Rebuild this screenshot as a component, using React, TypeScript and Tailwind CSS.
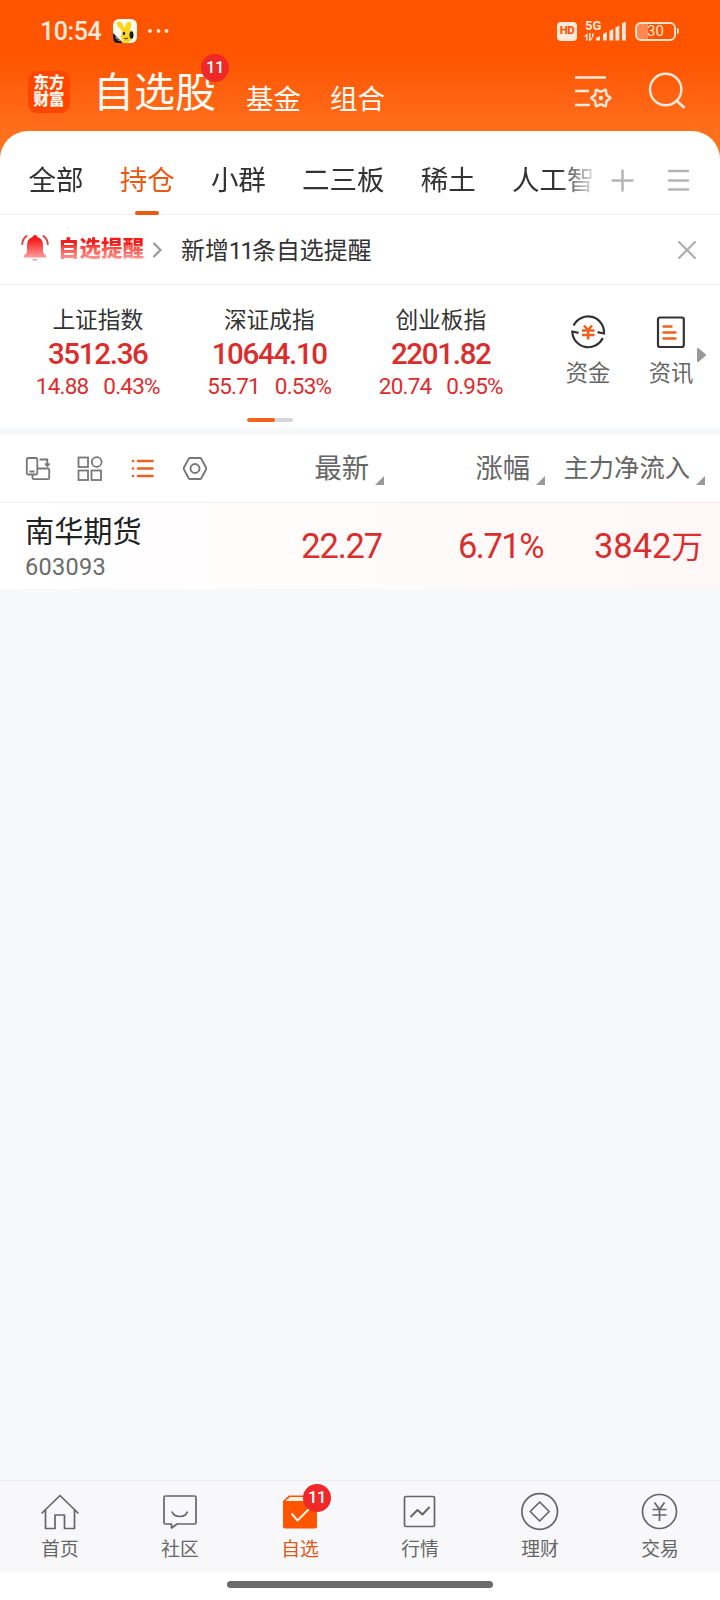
import React from "react";

const tabs = ["全部", "持仓", "小群", "二三板", "稀土", "人工智能"];

const indexes = [
  { name: "上证指数", value: "3512.36", change: "14.88", percent: "0.43%" },
  { name: "深证成指", value: "10644.10", change: "55.71", percent: "0.53%" },
  { name: "创业板指", value: "2201.82", change: "20.74", percent: "0.95%" },
];

function StatusBar() {
  return (
    <div className="flex h-[62px] items-center pl-[40px] pr-[41px] text-[#ffe9dc]">
      <span className="w-[64px] whitespace-nowrap pt-px text-[25px] font-medium leading-none tracking-[-0.4px]">
        10:54
      </span>
      <svg className="ml-[9px] h-6 w-6" viewBox="0 0 24 24">
        <rect width="24" height="24" rx="6" fill="#fffdf2" />
        <path
          d="M9 12L4 6Q2.500 2.500 6 2.500Q9 2.500 10.500 7L11.500 9L13 5Q15 1 18 4Q19 6 17 11Q21 14 20 18Q17 24 12 24Q8 23 8 17Z"
          fill="#ffd51e"
        />
        <path d="M0 14L10 24H5Q0 24 0 18Z" fill="#1d1b18" />
        <ellipse cx="18.500" cy="16" rx="2" ry="3.800" fill="#1d1b18" />
        <ellipse cx="11" cy="14.500" rx="1.200" ry="1.800" fill="#1d1b18" />
        <path d="M11 19Q13 21 15 19" fill="none" stroke="#333" />
        <path d="M2.500 18l2 2M5 20.500l1.500 1.500" stroke="#fff" />
      </svg>
      <svg className="ml-[11px] h-6 w-[22px]" viewBox="0 0 22 24" fill="currentColor">
        <circle cx="2" cy="12" r="1.9" />
        <circle cx="10.500" cy="12" r="1.9" />
        <circle cx="18.500" cy="12" r="1.9" />
      </svg>
      <span className="ml-auto flex h-[19px] w-5 items-center justify-center rounded-[4px] bg-[#ffe9dc] text-[11.500px] font-extrabold leading-none tracking-[-0.5px] text-[#ff5500]">
        HD
      </span>
      <svg className="ml-[7px] h-[24px] w-[43px]" viewBox="0 0 43 24" fill="currentColor">
        <text x="1" y="10.500" fontSize="13" fontWeight="700" fontFamily="Roboto">
          5G
        </text>
        <path d="M0 17.500l3.500-3.500v7.500H2v-4zM5 14h1.500v5.500L8.500 18v1.500L6 22H5zM8 14.500h1.500V18H8z" />
        <path d="M12 21.500v-2.500l4-2v4.500zM19 21.500v-6.500l3.800-2v8.500zM25.500 21.500v-9.500l3.800-2v11.500zM31.500 21.500V8.500l3.800-2v15zM38 21.500V4.500l3.800-2v19z" />
      </svg>
      <div className="ml-[8px] flex items-center">
        <div className="flex h-[19px] w-[41px] items-center rounded-[6px] border-2 border-[#ffe0cc] bg-linear-to-r from-[#ff8850] from-30% to-transparent to-30% text-[15px] leading-none">
          <span className="w-full text-center">30</span>
        </div>
        <span className="ml-px h-[6px] w-[2px] rounded-r bg-[#ffe0cc]" />
      </div>
    </div>
  );
}

function Header() {
  return (
    <div className="flex h-[69px] items-start text-[#fffaf5]">
      <div className="ml-7 mt-[9px] flex h-[42px] w-[42px] flex-col items-center justify-center rounded-[9px] bg-[#ff4600] text-[15.500px] font-black leading-[17px] text-[#fff5ea]">
        <span>东方</span>
        <span>财富</span>
      </div>
      <div className="relative ml-[23px] mt-[9px] w-[122px] whitespace-nowrap text-[41px] leading-[44px]">
        自选股
        <span className="absolute -top-[17px] left-[108px] flex h-7 w-7 items-center justify-center rounded-full bg-[#f02828] text-[16.500px] font-medium leading-none tracking-[-0.5px] text-white">
          11
        </span>
      </div>
      <span className="ml-[31px] mt-[22px] w-[55px] whitespace-nowrap text-[27.500px] leading-8">
        基金
      </span>
      <span className="ml-[29px] mt-[22px] w-[55px] whitespace-nowrap text-[27.500px] leading-8">
        组合
      </span>
      <svg
        className="ml-auto mt-[12px] h-[36px] w-[38px] text-[#ffe9dc]"
        viewBox="0 0 38 36"
        fill="none"
        stroke="currentColor"
        strokeWidth="2.400"
      >
        <path d="M1 3.500h31M1 17h14M1 31h15" />
        <path d="M34.900 22.600Q38.100 24 34.900 25.400Q31.750 26.800 32.100 30.200Q32.500 33.700 29.700 31.600Q26.900 29.600 24.100 31.600Q21.300 33.700 21.700 30.200Q22.050 26.800 18.900 25.400Q15.700 24 18.900 22.600Q22.050 21.200 21.700 17.800Q21.300 14.300 24.100 16.400Q26.900 18.400 29.700 16.400Q32.500 14.300 32.100 17.800Q31.750 21.200 34.900 22.600Z" />
        <circle cx="26.900" cy="24" r="1.500" fill="currentColor" strokeWidth="1.500" />
      </svg>
      <svg
        className="ml-[36px] mr-[34px] mt-[10px] h-[38px] w-[38px] text-[#ffe9dc]"
        viewBox="0 0 38 38"
        fill="none"
        stroke="currentColor"
        strokeWidth="2.400"
      >
        <circle cx="17.700" cy="17.500" r="15.700" />
        <path d="M28.500 28.500l8 7.500" strokeWidth="2.800" />
      </svg>
    </div>
  );
}

function Tabs() {
  return (
    <div className="relative flex h-[84px] items-center border-b border-[#ededef] pl-[28.500px]">
      <div className="flex w-[564px] gap-[36.200px] overflow-hidden whitespace-nowrap pt-[16px] text-[27.500px] leading-9 text-[#333] mask-r-from-94% mask-r-to-101%">
        {tabs.map((tab) => (
          <span key={tab} className={tab === "持仓" ? "text-[#ea5a14]" : ""}>
            {tab}
          </span>
        ))}
      </div>
      <span className="absolute -bottom-px left-[135px] h-1 w-6 rounded-full bg-[#ea5a14]" />
      <svg
        className="ml-[18px] mt-[15px] h-[23px] w-[23px] shrink-0"
        viewBox="0 0 23 23"
        stroke="#b4b4b4"
        strokeWidth="2.500"
        strokeLinecap="round"
      >
        <path d="M1.500 11.500h20M11.500 1.500v20" />
      </svg>
      <svg
        className="ml-[33px] mt-[15px] h-[23px] w-[23px] shrink-0"
        viewBox="0 0 23 23"
        stroke="#b4b4b4"
        strokeWidth="2.500"
        strokeLinecap="round"
      >
        <path d="M2 2h19M2 11.500h19M2 20.500h19" />
      </svg>
    </div>
  );
}

function AlertRow() {
  return (
    <div className="flex h-[70px] items-center border-b border-[#ededef] pl-[21px] pr-[23px]">
      <svg className="h-7 w-7 -mt-[3px]" viewBox="0 0 28 28" fill="none">
        <defs>
          <linearGradient id="bell" x1="0" y1="0" x2="0" y2="1">
            <stop offset="0.200" stopColor="#f51c1c" />
            <stop offset="1" stopColor="#ff9a9a" />
          </linearGradient>
        </defs>
        <path
          d="M14 1Q16 1 16.500 3Q22 5 22 11V18Q22.500 20 25 21.500V23.500H3V21.500Q5.500 20 6 18V11Q6 5 11.500 3Q12 1 14 1Z"
          fill="url(#bell)"
        />
        <path d="M11 25h6q-1 2-3 2t-3-2z" fill="#ffa5a5" />
        <path
          d="M5.500 2Q1.500 5 1.200 10M22.500 2Q26.500 5 26.800 10"
          stroke="#e84040"
          strokeWidth="2"
          strokeLinecap="round"
        />
      </svg>
      <span className="ml-[9px] -mt-px w-[87px] whitespace-nowrap bg-linear-to-b from-[#f31b1b] from-30% to-[#ff9a9a] to-90% bg-clip-text text-[21.500px] font-black leading-7 text-transparent">
        自选提醒
      </span>
      <svg
        className="ml-[7px] h-4 w-[10px]"
        viewBox="0 0 10 16"
        fill="none"
        stroke="#999"
        strokeWidth="2.200"
      >
        <path d="M1.500 1l7 7-7 7" />
      </svg>
      <span className="ml-[19px] whitespace-nowrap pt-[2px] text-[23.900px] leading-8 text-[#333]">
        新增<span className="tracking-[-1.800px]">11</span>条自选提醒
      </span>
      <svg
        className="ml-auto h-5 w-5"
        viewBox="0 0 20 20"
        stroke="#b0b0b0"
        strokeWidth="2.300"
        strokeLinecap="round"
      >
        <path d="M2 2l16 16M18 2L2 18" />
      </svg>
    </div>
  );
}

function Indexes() {
  return (
    <div className="relative flex h-[143px] pl-[12px] pt-[24px]">
      {indexes.map((item) => (
        <div
          key={item.name}
          className="flex w-[171.500px] flex-col items-center whitespace-nowrap text-[#dc2d2d]"
        >
          <span className="text-[22.700px] leading-6 text-[#333]">{item.name}</span>
          <span className="mt-[5px] text-[29.500px] font-medium leading-8 tracking-[-1.300px]">
            {item.value}
          </span>
          <div className="mt-[4px] flex gap-[15px] text-[22.500px] leading-6 tracking-[-0.800px]">
            <span>{item.change}</span>
            <span>{item.percent}</span>
          </div>
        </div>
      ))}
      <div className="ml-[20px] mt-[5px] flex w-[83px] flex-col items-center text-[22.300px] leading-7 text-[#666]">
        <svg className="h-9 w-9" viewBox="0 0 36 36" fill="none" strokeWidth="2.200">
          <path
            d="M3.600 11.500A16 16 0 0 1 34 19.500L27.500 18.200M32.800 24A16 16 0 0 1 2.300 17.500L8.500 18.800"
            stroke="#333"
          />
          <path
            d="M14 11.500l4 4.500 4-4.500M12 16.500h12.500M12 21h12.500M18.200 16v9.500"
            stroke="#f1621d"
            strokeWidth="2.500"
          />
        </svg>
        <span className="mt-[9px]">资金</span>
      </div>
      <div className="mt-[5px] flex w-[83px] flex-col items-center text-[22.300px] leading-7 text-[#666]">
        <svg className="h-9 w-9" viewBox="0 0 36 36" fill="none">
          <rect x="5" y="3.500" width="25.800" height="29.500" rx="2" stroke="#333" strokeWidth="2.200" />
          <path
            d="M10.500 12.500h8M10.500 18.500h12M10.500 24.500h12"
            stroke="#f1621d"
            strokeWidth="2.400"
            strokeLinecap="round"
          />
        </svg>
        <span className="mt-[9px]">资讯</span>
      </div>
      <svg className="absolute left-[696px] top-[62px] h-4 w-[10px]" viewBox="0 0 10 16">
        <path
          d="M2 2L9 8l-7 6z"
          fill="#999"
          stroke="#999"
          strokeWidth="2"
          strokeLinejoin="round"
        />
      </svg>
      <div className="absolute left-[247px] top-[133px] flex h-[4px] w-[46px] overflow-hidden rounded-full bg-[#d4d6da]">
        <span className="w-[28px] rounded-full bg-[#f4621c]" />
      </div>
    </div>
  );
}

function SortMark() {
  return (
    <svg className="h-[9px] w-[9px]" viewBox="0 0 9 9">
      <path d="M9 0v9H0z" fill="#999" />
    </svg>
  );
}

function TableHead() {
  return (
    <div className="flex h-[68px] items-center border-b border-[#f0f0f2] pl-[25px] pr-[15px] text-[27.300px] text-[#666]">
      <div className="flex w-[183px] items-center justify-between">
        <svg
          className="h-[26px] w-[26px]"
          viewBox="0 0 26 26"
          fill="none"
          stroke="#777"
          strokeWidth="1.800"
        >
          <rect x="1.800" y="2" width="10.500" height="16.500" rx="1.500" />
          <path d="M4.500 15.500h5M14.500 3.500h7.800v6M20 7.500l2.300 2.700 2.300-2.700" />
          <path d="M13 12.500h10q1.200 0 1.200 1.200v8.300q0 1.200-1.200 1.200H8.700q-1.200 0-1.200-1.200v-3" />
        </svg>
        <svg
          className="h-[26px] w-[26px]"
          viewBox="0 0 26 26"
          fill="none"
          stroke="#777"
          strokeWidth="1.800"
        >
          <rect x="1.500" y="1.500" width="9.500" height="9.500" />
          <circle cx="19.700" cy="6" r="4.900" />
          <rect x="1.500" y="14.500" width="9.500" height="9.500" />
          <rect x="14.500" y="14.500" width="9.500" height="9.500" />
        </svg>
        <svg
          className="h-[26px] w-[26px]"
          viewBox="0 0 26 26"
          stroke="#ea6020"
          strokeWidth="2.600"
          strokeLinecap="round"
        >
          <path d="M3 5h.1M3 12.500h.1M3 20h.1M8 5h14.500M8 12.500h14.500M8 20h14.500" />
        </svg>
        <svg
          className="h-[26px] w-[26px]"
          viewBox="0 0 26 26"
          fill="none"
          stroke="#777"
          strokeWidth="1.900"
        >
          <path d="M8 2h10q.8 0 1.300.8l4.700 8.700q.5 1 0 2l-4.700 8.700q-.5.800-1.300.800H8q-.800 0-1.300-.800l-4.700-8.700q-.5-1 0-2l4.700-8.700q.5-.8 1.300-.8z" />
          <circle cx="13" cy="12.500" r="4.500" />
        </svg>
      </div>
      <div className="flex w-[176px] items-end justify-end gap-[6px]">
        <span className="leading-8">最新</span>
        <SortMark />
      </div>
      <div className="flex w-[161px] items-end justify-end gap-[6px]">
        <span className="leading-8">涨幅</span>
        <SortMark />
      </div>
      <div className="flex w-[160px] items-end justify-end gap-[6px]">
        <span className="whitespace-nowrap text-[25.300px] leading-8">主力净流入</span>
        <SortMark />
      </div>
    </div>
  );
}

function StockRow() {
  return (
    <div className="flex h-[86px] bg-linear-to-r from-white to-[#fff7f7] pl-[25px] pr-[17px]">
      <div className="w-[184px] whitespace-nowrap pt-[11px]">
        <p className="text-[29.200px] leading-9 text-[#222]">南华期货</p>
        <p className="text-[23.500px] leading-[34px] tracking-[0.300px] text-[#6b6b6b]">603093</p>
      </div>
      <div className="flex flex-1 items-center pt-px text-[34.500px] leading-none text-[#dc2d2d]">
        <span className="w-[174.500px] text-right tracking-[-1.200px]">22.27</span>
        <span className="w-[161px] text-right tracking-[-1.500px]">6.71%</span>
        <span className="w-[160px] whitespace-nowrap text-right">
          3842<span className="text-[31.500px]">万</span>
        </span>
      </div>
    </div>
  );
}

function NavItem({
  label,
  active,
  children,
}: {
  label: string;
  active?: boolean;
  children: React.ReactNode;
}) {
  return (
    <div
      className={
        active
          ? "flex w-[120px] flex-col items-center text-[#dc5a14]"
          : "flex w-[120px] flex-col items-center text-[#666]"
      }
    >
      <div className="relative h-[40px] w-[40px]">
        <svg
          className="h-[40px] w-[40px]"
          viewBox="0 0 40 40"
          fill="none"
          stroke="currentColor"
          strokeWidth="1.700"
          strokeLinejoin="round"
        >
          {children}
        </svg>
        {active && (
          <span className="absolute -top-[8px] left-[23px] flex h-7 w-7 items-center justify-center rounded-full bg-[#f02828] text-[16.500px] font-medium leading-none tracking-[-0.5px] text-white">
            11
          </span>
        )}
      </div>
      <span className="mt-[4px] text-[18.800px] leading-7">{label}</span>
    </div>
  );
}

function BottomNav() {
  return (
    <div className="flex h-[92px] border-t border-[#ebecee] bg-[#f8f8fa] pt-[11px]">
      <NavItem label="首页">
        <path d="M1.500 21.500L20 3.500l18.500 18M5.500 18v18.500h9.500V23h9.500v13.500h10V18" />
      </NavItem>
      <NavItem label="社区">
        <path d="M5.500 4h29q1.500 0 1.500 1.500v25q0 1.500-1.500 1.500H17l-5.500 4v-4h-6Q4 32 4 30.500v-25Q4 4 5.500 4z" />
        <path d="M12 19.500Q13.500 24.500 19.800 24.500Q26 24.500 27.500 19.500" />
      </NavItem>
      <NavItem label="自选" active>
        <path d="M3 9l6-5.500h26L37 9v25.500q0 2-2 2H5q-2 0-2-2z" fill="#ff5500" stroke="none" />
        <path d="M5.500 9l4.500-4h20v4z" fill="#fff3e8" stroke="none" />
        <path d="M11.500 21.500l6 7 12-12" stroke="#fff3e8" strokeWidth="2" />
      </NavItem>
      <NavItem label="行情">
        <rect x="4.500" y="4.500" width="30" height="30" rx="1.500" />
        <path d="M10.500 25l7-7 5 4.500 7-7.500" strokeWidth="2" />
      </NavItem>
      <NavItem label="理财">
        <circle cx="19.700" cy="19.500" r="17.800" />
        <path d="M19.700 10l9.500 9.500-9.500 9.500-9.500-9.500z" />
      </NavItem>
      <NavItem label="交易">
        <circle cx="19.500" cy="19.500" r="17" />
        <path d="M14.500 10.500l5 7 5-7M12.500 17.500h14M12.500 23h14M19.500 17.500v11.500" />
      </NavItem>
    </div>
  );
}

export default function App() {
  return (
    <div className="flex h-[1600px] w-[720px] flex-col overflow-hidden bg-[#f6f8fa] font-['Roboto','Noto_Sans_CJK_SC',sans-serif]">
      <div className="bg-linear-to-b from-[#ff5500] from-[58px] to-[#ff7420] to-[150px]">
        <StatusBar />
        <Header />
        <div className="rounded-t-[28px] bg-white">
          <Tabs />
        </div>
      </div>
      <div className="bg-white">
        <AlertRow />
        <Indexes />
      </div>
      <div className="mt-[7px] bg-white">
        <TableHead />
        <StockRow />
      </div>
      <div className="flex-1" />
      <BottomNav />
      <div className="flex h-[28px] justify-center bg-white pt-[9px]">
        <span className="h-[7px] w-[266px] rounded-full bg-[#6b6b6b]" />
      </div>
    </div>
  );
}
